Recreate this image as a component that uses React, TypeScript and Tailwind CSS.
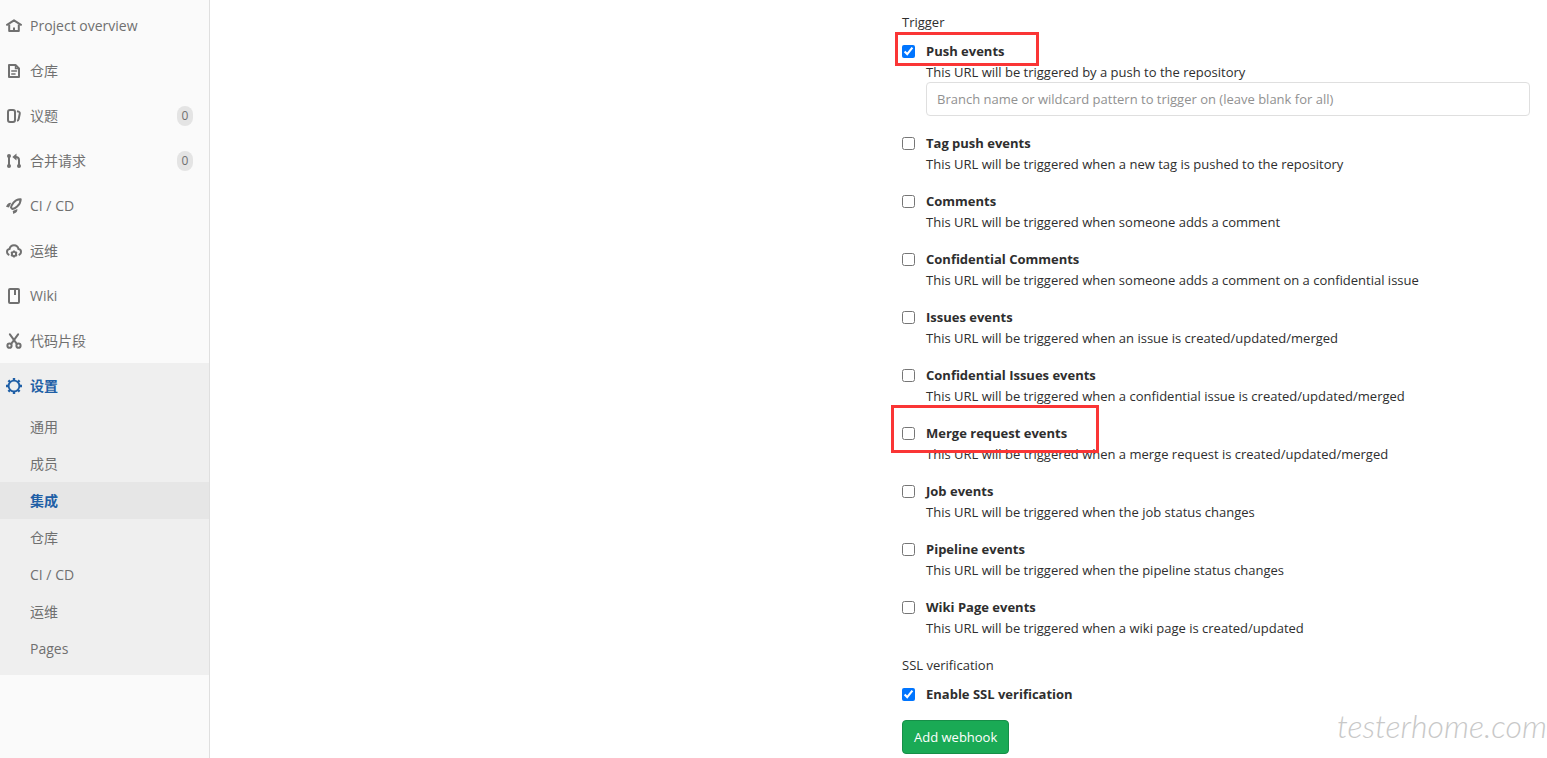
import React, { useState } from 'react';

interface NavItem {
  label: string;
  icon: React.ReactNode;
  count?: number;
}

interface TriggerEvent {
  id: string;
  label: string;
  help: string;
  hasBranchFilter?: boolean;
  highlight?: string;
}

const Icon: React.FC<{ children: React.ReactNode }> = ({ children }) => (
  <svg className="w-4 h-4 shrink-0" viewBox="0 0 16 16" fill="none" stroke="currentColor" strokeWidth="2" aria-hidden="true">
    {children}
  </svg>
);

const HomeIcon = () => (
  <Icon>
    <path d="M1 6.800 8 2.300l7 4.500" strokeLinecap="round" strokeLinejoin="round" />
    <path d="M3.200 6.500V13h9.600V6.500" strokeLinejoin="round" />
    <path d="M8 9.500V13" />
  </Icon>
);

const DocIcon = () => (
  <Icon>
    <path d="M3 2h6.500L13 5.500V14H3z" strokeLinejoin="round" />
    <path d="M9.500 2v3.500H13" strokeWidth="1.400" />
    <path d="M5.800 8h4.700M5.800 11H9" strokeWidth="1.600" strokeLinecap="round" />
  </Icon>
);

const IssuesIcon = () => (
  <Icon>
    <rect x="2" y="2" width="7" height="12" rx="2" />
    <path d="M11 3.200l1.600.4c.9.3 1.400 1 1.200 1.900l-1.200 5.700c-.2.8-.8 1.400-1.600 1.600" />
  </Icon>
);

const MergeIcon = () => (
  <Icon>
    <path d="M3 3v10M13 13V7c0-2-1-3-3.500-3" />
    <circle cx="3" cy="3" r="2" fill="currentColor" stroke="none" />
    <circle cx="3" cy="13" r="2" fill="currentColor" stroke="none" />
    <circle cx="13" cy="13" r="2" fill="currentColor" stroke="none" />
    <path d="M10.500 .6v6.800L6.300 4z" fill="currentColor" stroke="none" />
  </Icon>
);

const RocketIcon = () => (
  <Icon>
    <path d="M14.700 1.300C11.500 1.100 9.300 2.400 7.500 4.700 6.100 6.500 5.200 8.300 5 9.600l1.400 1.400c1.500-.2 3.200-1.100 4.700-2.500 2.300-2 3.600-4.200 3.600-7.200z" strokeLinejoin="round" />
    <path d="M5.200 4.700 3 4.900C1.600 5.600.6 7 0 8.800L3 9.400zM11.400 10.900l-.2 2.200c-.7 1.300-2 2.300-3.900 2.800L6.700 13z" fill="currentColor" stroke="none" />
  </Icon>
);

const CloudGearIcon = () => (
  <Icon>
    <path d="M2.600 11.600C1.600 11 1 10 1 8.900c0-1.500 1-2.700 2.500-2.900C4 3.700 5.800 2.200 8 2.200s4 1.500 4.500 3.800C14 6.200 15 7.400 15 8.900c0 1.100-.6 2.100-1.600 2.700" strokeLinecap="round" />
    <circle cx="8" cy="11" r="2.100" strokeWidth="1.900" />
    <path d="M8 7.400v1.500M8 13.100v1.500M4.900 9.200l1.300.7M9.800 12.100l1.300.7M11.100 9.200l-1.300.7M6.200 12.100l-1.300.7" strokeWidth="1.800" />
  </Icon>
);

const BookIcon = () => (
  <Icon>
    <rect x="3" y="1" width="10" height="14" rx="1" />
    <path d="M9 1.500V7" />
  </Icon>
);

const ScissorsIcon = () => (
  <Icon>
    <circle cx="3.500" cy="12.700" r="2.100" />
    <circle cx="12.500" cy="12.700" r="2.100" />
    <path d="M3.900 1.300 10.800 10.800M12.100 1.300 5.200 10.800" strokeLinecap="round" />
  </Icon>
);

const GearIcon = () => (
  <Icon>
    <circle cx="8" cy="8" r="5.400" strokeWidth="1.900" />
    <path d="M8 0v2.500M8 13.500V16M0 8h2.500M13.500 8H16M2.400 2.400 4 4M12 12l1.600 1.600M2.400 13.600 4 12M12 4l1.600-1.600" strokeWidth="2.400" />
  </Icon>
);

const navItems: NavItem[] = [
  { label: 'Project overview', icon: <HomeIcon /> },
  { label: '仓库', icon: <DocIcon /> },
  { label: '议题', icon: <IssuesIcon />, count: 0 },
  { label: '合并请求', icon: <MergeIcon />, count: 0 },
  { label: 'CI / CD', icon: <RocketIcon /> },
  { label: '运维', icon: <CloudGearIcon /> },
  { label: 'Wiki', icon: <BookIcon /> },
  { label: '代码片段', icon: <ScissorsIcon /> },
];

const settingsItems = ['通用', '成员', '集成', '仓库', 'CI / CD', '运维', 'Pages'];

const triggerEvents: TriggerEvent[] = [
  {
    id: 'push_events',
    label: 'Push events',
    help: 'This URL will be triggered by a push to the repository',
    hasBranchFilter: true,
    highlight: '-left-[7px] -top-[9px] w-36 h-[34px]',
  },
  { id: 'tag_push_events', label: 'Tag push events', help: 'This URL will be triggered when a new tag is pushed to the repository' },
  { id: 'note_events', label: 'Comments', help: 'This URL will be triggered when someone adds a comment' },
  { id: 'confidential_note_events', label: 'Confidential Comments', help: 'This URL will be triggered when someone adds a comment on a confidential issue' },
  { id: 'issues_events', label: 'Issues events', help: 'This URL will be triggered when an issue is created/updated/merged' },
  { id: 'confidential_issues_events', label: 'Confidential Issues events', help: 'This URL will be triggered when a confidential issue is created/updated/merged' },
  {
    id: 'merge_requests_events',
    label: 'Merge request events',
    help: 'This URL will be triggered when a merge request is created/updated/merged',
    highlight: '-left-[11px] -top-[18px] w-52 h-12',
  },
  { id: 'job_events', label: 'Job events', help: 'This URL will be triggered when the job status changes' },
  { id: 'pipeline_events', label: 'Pipeline events', help: 'This URL will be triggered when the pipeline status changes' },
  { id: 'wiki_page_events', label: 'Wiki Page events', help: 'This URL will be triggered when a wiki page is created/updated' },
];

const Sidebar: React.FC = () => (
  <nav className="w-[210px] shrink-0 bg-[#fafafa] border-r border-[#dfdfdf] pt-[3px] text-sm text-[#707070]">
    <ul>
      {navItems.map((item) => (
        <li key={item.label}>
          <a href="#" className="flex items-center gap-2 h-[45px] pl-1.5 pr-4">
            {item.icon}
            <span className="flex-1">{item.label}</span>
            {item.count !== undefined && (
              <span className="w-4 h-5 rounded-full bg-[#e4e4e4] text-xs leading-5 text-center">{item.count}</span>
            )}
          </a>
        </li>
      ))}
      <li className="bg-[#efefef] pb-2">
        <a href="#" className="flex items-center gap-2 h-[45px] pl-1.5 font-bold text-[#1f5fa6]">
          <GearIcon />
          <span>设置</span>
        </a>
        <ul>
          {settingsItems.map((label) => (
            <li key={label}>
              <a
                href="#"
                className={`flex items-center h-[37px] pl-[30px] ${
                  label === '集成' ? 'bg-[#e6e6e6] font-bold text-[#1f5fa6]' : ''
                }`}
              >
                {label}
              </a>
            </li>
          ))}
        </ul>
      </li>
    </ul>
  </nav>
);

export default function App() {
  const [checked, setChecked] = useState<Record<string, boolean>>({ push_events: true });
  const [sslEnabled, setSslEnabled] = useState(true);

  return (
    <div className="relative flex min-h-screen overflow-hidden bg-white font-['Open_Sans','Noto_Sans_CJK_SC',sans-serif] text-[13px] leading-[21px] text-[#2e2e2e]">
      <Sidebar />
      <main className="grid flex-1 grid-cols-2 gap-16 pt-3 pr-[17px] pb-1">
        <form className="col-start-2" onSubmit={(e) => e.preventDefault()}>
          <fieldset>
            <legend className="mb-2">Trigger</legend>
            <ul className="flex flex-col gap-[17px]">
              {triggerEvents.map((event) => (
                <li key={event.id} className="relative">
                  <div className="flex items-center gap-[11px]">
                    <input
                      type="checkbox"
                      id={event.id}
                      className="w-[13px] h-[13px]"
                      checked={!!checked[event.id]}
                      onChange={(e) => setChecked({ ...checked, [event.id]: e.target.checked })}
                    />
                    <label htmlFor={event.id} className="font-bold">{event.label}</label>
                  </div>
                  <p className="pl-6 leading-5">{event.help}</p>
                  {event.hasBranchFilter && (
                    <div className="pl-6">
                      <input
                        type="text"
                        aria-label="Branch filter"
                        placeholder="Branch name or wildcard pattern to trigger on (leave blank for all)"
                        className="block w-full h-[34px] px-2.5 rounded border border-[#dfdfdf] placeholder:text-[#919191]"
                      />
                    </div>
                  )}
                  {event.highlight && (
                    <span className={`absolute border-3 border-[#fa3535] pointer-events-none ${event.highlight}`} />
                  )}
                </li>
              ))}
            </ul>
          </fieldset>
          <fieldset className="mt-[17px]">
            <legend className="mb-2">SSL verification</legend>
            <div className="flex items-center gap-[11px]">
              <input
                type="checkbox"
                id="enable_ssl"
                className="w-[13px] h-[13px]"
                checked={sslEnabled}
                onChange={(e) => setSslEnabled(e.target.checked)}
              />
              <label htmlFor="enable_ssl" className="font-bold">Enable SSL verification</label>
            </div>
          </fieldset>
          <button type="submit" className="mt-[15px] h-[34px] px-[11px] rounded border border-[#168f48] bg-[#1aaa55] text-white">
            Add webhook
          </button>
        </form>
      </main>
      <span className="absolute right-0 bottom-3 font-['Lato',sans-serif] text-[32px] leading-10 font-light italic text-[#c8c8c8] pointer-events-none">
        testerhome.com
      </span>
    </div>
  );
}
